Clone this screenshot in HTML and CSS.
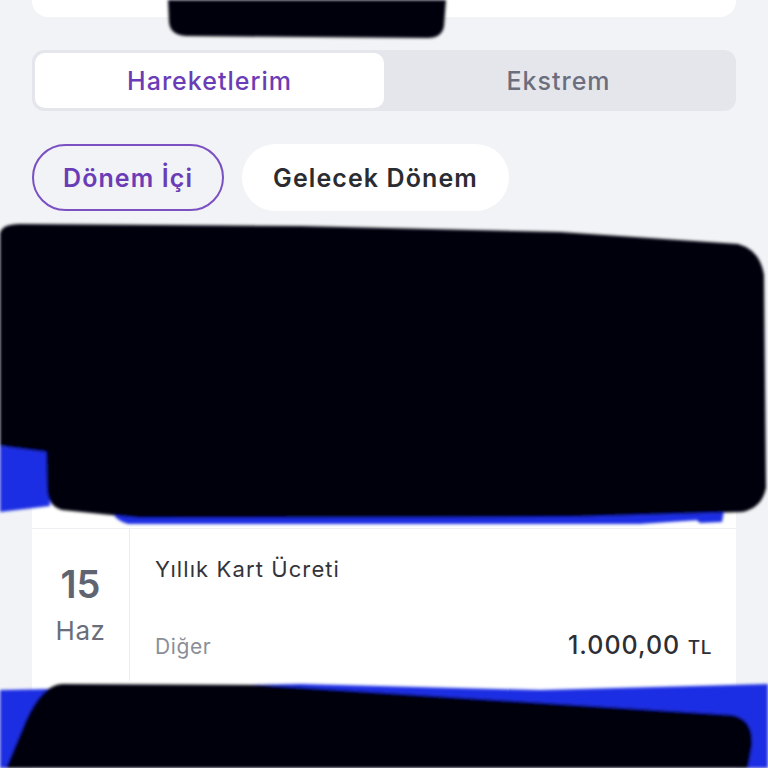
FILE: index.html
```html
<!DOCTYPE html>
<html lang="tr">
<head>
<meta charset="utf-8">
<title>Hareketlerim</title>
<link rel="stylesheet" href="styles.css">
</head>
<body>
<div class="page">
  <div class="topcard"></div>

  <div class="seg">
    <div class="seg-item active">Hareketlerim</div>
    <div class="seg-item">Ekstrem</div>
  </div>

  <div class="chips">
    <div class="chip chip-active">Dönem İçi</div>
    <div class="chip">Gelecek Dönem</div>
  </div>

  <div class="gap"></div>

  <div class="list">
    <div class="row row-blank"></div>
    <div class="row">
      <div class="date">
        <div class="day">15</div>
        <div class="month">Haz</div>
      </div>
      <div class="info">
        <div class="title">Yıllık Kart Ücreti</div>
        <div class="bottom">
          <span class="cat">Diğer</span>
          <span class="amount">1.000,00 <span class="cur">TL</span></span>
        </div>
      </div>
    </div>
    <div class="row row-blank"></div>
  </div>
</div>

<svg class="redact" width="768" height="768" viewBox="0 0 768 768" aria-hidden="true">
  <defs>
    <filter id="soft" x="-5%" y="-5%" width="110%" height="110%">
      <feGaussianBlur stdDeviation="1.8"/>
    </filter>
  </defs>
  <g filter="url(#soft)">
    <path fill="#06050e" d="M168,0 L446,0 L444,26 Q442,38 428,38 L186,36 Q170,35 169,22 Z"/>

    <path fill="#1e2fe3" d="M0,446 L47,450 L50,506 L0,512 Z"/>
    <path fill="#1e2fe3" d="M112,500 L705,500 L700,520 L640,524 L128,524 Q114,520 112,510 Z"/>
    <path fill="#1e2fe3" d="M680,505 L725,505 L722,522 L700,523 Z"/>
    <path fill="#06050e" d="M0,234 Q1,224 20,224 L300,226 L560,232 L738,244 Q760,250 764,275 L766,488 Q762,508 742,512 L570,517 L140,518 L62,510 Q48,506 47,490 L46,452 L0,446 Z"/>

    <path fill="#1e2fe3" d="M0,690 L300,684 L540,690 L768,684 L768,768 L0,768 Z"/>
    <path fill="#06050e" d="M62,684 L260,685 L560,704 L733,715 Q754,720 752,746 L748,768 L6,768 L26,720 Q42,685 62,684 Z"/>
  </g>
</svg>
</body>
</html>
```

FILE: styles.css
```css
html, body {
  margin: 0;
  padding: 0;
}

body {
  width: 768px;
  height: 768px;
  overflow: hidden;
  position: relative;
  background: #f2f3f7;
  font-family: Inter, "Noto Sans", "Liberation Sans", sans-serif;
  -webkit-font-smoothing: antialiased;
}

.page {
  padding: 0 32px;
}

.topcard {
  height: 17px;
  background: #ffffff;
  border-radius: 0 0 16px 16px;
}

.seg {
  margin-top: 33px;
  height: 61px;
  box-sizing: border-box;
  padding: 3px;
  background: #e5e6eb;
  border-radius: 12px;
  display: grid;
  grid-template-columns: 1fr 1fr;
}

.seg-item {
  display: flex;
  align-items: center;
  justify-content: center;
  font-size: 25px;
  font-weight: 500;
  letter-spacing: 1px;
  color: #6b6f7d;
  border-radius: 10px;
}

.seg-item.active {
  background: #ffffff;
  color: #6a3db6;
}

.chips {
  margin-top: 33px;
  display: flex;
  gap: 18px;
}

.chip {
  height: 67px;
  box-sizing: border-box;
  border-radius: 34px;
  background: #ffffff;
  display: flex;
  align-items: center;
  justify-content: center;
  padding: 0 31px;
  font-size: 25px;
  font-weight: 600;
  letter-spacing: 1.1px;
  color: #2b2c31;
}

.chip-active {
  background: transparent;
  border: 2px solid #7a50c2;
  color: #6a3db6;
  padding: 0 29px;
}

.gap {
  height: 229px;
}

.list {
  background: #ffffff;
}

.row {
  display: flex;
  height: 153px;
  border-top: 1px solid #eeeff3;
  box-sizing: border-box;
}

.row-blank {
  height: 88px;
  border-top: none;
}

.date {
  width: 98px;
  border-right: 1px solid #ececf0;
  display: flex;
  flex-direction: column;
  align-items: center;
  padding-top: 35px;
  box-sizing: border-box;
}

.day {
  font-size: 38px;
  font-weight: 600;
  color: #5f6472;
  line-height: 40px;
}

.month {
  font-size: 26px;
  letter-spacing: 0.5px;
  color: #6a6e7a;
  line-height: 30px;
  margin-top: 12px;
}

.info {
  flex: 1;
  padding: 26px 24px 0 25px;
  display: flex;
  flex-direction: column;
}

.title {
  font-size: 22px;
  letter-spacing: 1.1px;
  color: #33343a;
  line-height: 28px;
}

.bottom {
  margin-top: 47px;
  display: flex;
  justify-content: space-between;
  align-items: baseline;
}

.cat {
  font-size: 21px;
  letter-spacing: 0.6px;
  color: #8a8e98;
}

.amount {
  font-size: 25px;
  font-weight: 500;
  letter-spacing: 1px;
  color: #2e2f34;
}

.cur {
  font-size: 19px;
  letter-spacing: 0.5px;
}

.redact {
  position: absolute;
  top: 0;
  left: 0;
  pointer-events: none;
}
```
